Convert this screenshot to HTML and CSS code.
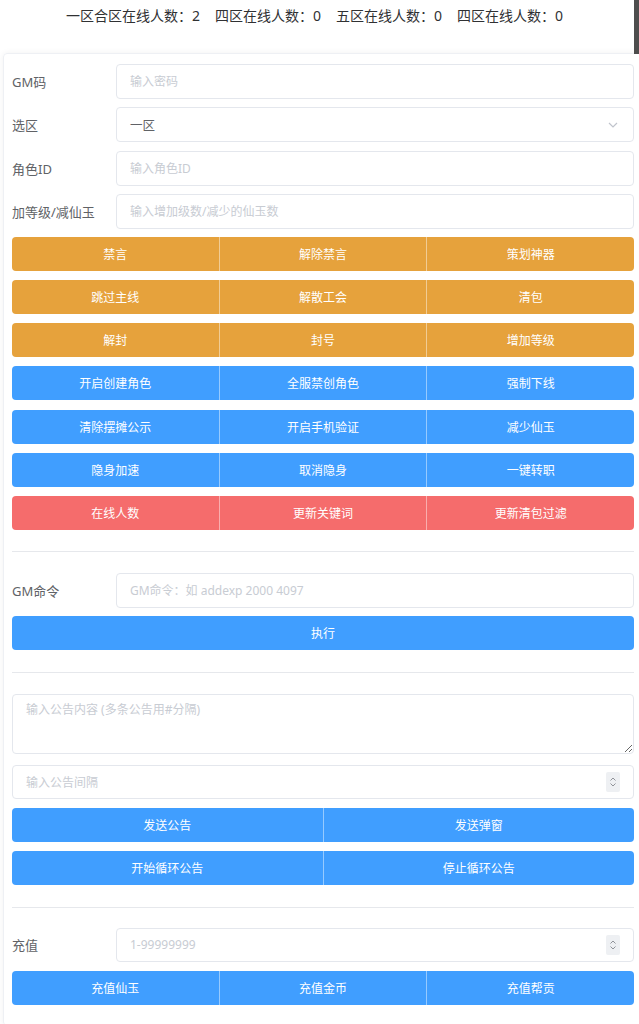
FILE: index.html
```html
<!DOCTYPE html>
<html lang="zh-CN">
<head>
<meta charset="utf-8">
<title>GM</title>
<link rel="stylesheet" href="styles.css">
</head>
<body>
<div class="topbar-thumb"></div>
<header class="stats">
  <span>一区合区在线人数：2</span>
  <span>四区在线人数：0</span>
  <span>五区在线人数：0</span>
  <span>四区在线人数：0</span>
</header>
<main class="card">
  <section class="form">
    <div class="row">
      <label class="label">GM码</label>
      <input class="input" type="text" placeholder="输入密码">
    </div>
    <div class="row">
      <label class="label">选区</label>
      <div class="input select">
        <span class="value">一区</span>
        <svg class="chev" width="10" height="6" viewBox="0 0 10 6"><polyline points="1,1 5,5 9,1" fill="none" stroke="#c0c4cc" stroke-width="1.2"/></svg>
      </div>
    </div>
    <div class="row">
      <label class="label">角色ID</label>
      <input class="input" type="text" placeholder="输入角色ID">
    </div>
    <div class="row">
      <label class="label">加等级/减仙玉</label>
      <input class="input" type="text" placeholder="输入增加级数/减少的仙玉数">
    </div>
  </section>

  <section class="btn-rows">
    <div class="group warning"><button>禁言</button><button>解除禁言</button><button>策划神器</button></div>
    <div class="group warning"><button>跳过主线</button><button>解散工会</button><button>清包</button></div>
    <div class="group warning"><button>解封</button><button>封号</button><button>增加等级</button></div>
    <div class="group primary"><button>开启创建角色</button><button>全服禁创角色</button><button>强制下线</button></div>
    <div class="group primary"><button>清除摆摊公示</button><button>开启手机验证</button><button>减少仙玉</button></div>
    <div class="group primary"><button>隐身加速</button><button>取消隐身</button><button>一键转职</button></div>
    <div class="group danger"><button>在线人数</button><button>更新关键词</button><button>更新清包过滤</button></div>
  </section>

  <hr class="divider d1">

  <section class="cmd">
    <div class="row">
      <label class="label">GM命令</label>
      <input class="input" type="text" placeholder="GM命令：如 addexp 2000 4097">
    </div>
    <div class="group primary single"><button>执行</button></div>
  </section>

  <hr class="divider d2">

  <section class="notice">
    <textarea class="textarea" placeholder="输入公告内容 (多条公告用#分隔)"></textarea>
    <div class="input number full">
      <span class="ph">输入公告间隔</span>
      <span class="spin"><svg width="8" height="12" viewBox="0 0 8 12"><polyline points="1.5,4.5 4,2 6.5,4.5" fill="none" stroke="#909399" stroke-width="1"/><polyline points="1.5,7.5 4,10 6.5,7.5" fill="none" stroke="#909399" stroke-width="1"/></svg></span>
    </div>
    <div class="group primary two"><button>发送公告</button><button>发送弹窗</button></div>
    <div class="group primary two"><button>开始循环公告</button><button>停止循环公告</button></div>
  </section>

  <hr class="divider d3">

  <section class="recharge">
    <div class="row">
      <label class="label">充值</label>
      <div class="input number">
        <span class="ph">1-99999999</span>
        <span class="spin"><svg width="8" height="12" viewBox="0 0 8 12"><polyline points="1.5,4.5 4,2 6.5,4.5" fill="none" stroke="#909399" stroke-width="1"/><polyline points="1.5,7.5 4,10 6.5,7.5" fill="none" stroke="#909399" stroke-width="1"/></svg></span>
      </div>
    </div>
    <div class="group primary"><button>充值仙玉</button><button>充值金币</button><button>充值帮贡</button></div>
  </section>
</main>
</body>
</html>
```
FILE: styles.css
```css
html, body {
  margin: 0;
  padding: 0;
  overflow: hidden;
  background: #ffffff;
}
body {
  font-family: "Noto Sans", "Noto Sans CJK SC", sans-serif;
  color: #606266;
  width: 639px;
  position: relative;
}
.topbar-thumb {
  position: absolute;
  top: 0;
  right: 0;
  width: 5px;
  height: 54px;
  background: #4d4d4d;
}
.stats {
  box-sizing: border-box;
  height: 53px;
  padding: 6px 10px 0 0;
  display: flex;
  justify-content: center;
  gap: 15px;
  font-size: 14px;
  line-height: 20px;
  color: #303133;
}
.card {
  box-sizing: border-box;
  margin-left: 3px;
  width: 640px;
  border: 1px solid #eef0f4;
  border-radius: 4px;
  box-shadow: 0 0 6px rgba(0, 0, 0, 0.06);
  padding: 10px 8px 20px 8px;
  display: flex;
  flex-direction: column;
}
.card > * {
  width: 622px;
}
.form {
  display: flex;
  flex-direction: column;
  gap: 8.33px;
}
.row {
  display: flex;
  align-items: center;
  height: 35px;
}
.label {
  width: 104px;
  flex: none;
  font-size: 13px;
  color: #606266;
}
.input {
  box-sizing: border-box;
  flex: 1;
  height: 35px;
  border: 1px solid #e4e7ed;
  border-radius: 4px;
  padding: 0 13px;
  font-family: inherit;
  font-size: 12px;
  color: #606266;
  outline: none;
  background: #fff;
}
.input::placeholder,
.textarea::placeholder,
.ph {
  color: #c8ccd3;
}
.select {
  display: flex;
  align-items: center;
  justify-content: space-between;
}
.select .value {
  font-size: 12.5px;
}
.chev {
  margin-right: 2px;
}
.btn-rows {
  margin-top: 8px;
  display: flex;
  flex-direction: column;
  gap: 9.17px;
}
.group {
  display: flex;
  height: 34px;
  border-radius: 4px;
  overflow: hidden;
}
.group button {
  flex: 1;
  border: none;
  margin: 0;
  padding: 0;
  font-family: inherit;
  font-size: 12px;
  color: #fff;
  border-left: 1px solid rgba(255, 255, 255, 0.45);
}
.group button:first-child {
  border-left: none;
}
.warning button { background: #e6a23c; }
.primary button { background: #409eff; }
.danger button { background: #f56c6c; }
.divider {
  border: none;
  height: 1px;
  background: #e6e8ec;
  margin: 0;
}
.d1 { margin-top: 21px; }
.d2 { margin-top: 22px; }
.d3 { margin-top: 22px; }
.cmd {
  margin-top: 21px;
  display: flex;
  flex-direction: column;
  gap: 8px;
}
.notice {
  margin-top: 21px;
  display: flex;
  flex-direction: column;
}
.textarea {
  box-sizing: border-box;
  height: 60px;
  border: 1px solid #e4e7ed;
  border-radius: 4px;
  padding: 6px 13px;
  font-family: inherit;
  font-size: 12px;
  line-height: 18px;
  resize: vertical;
  outline: none;
}
.number {
  display: flex;
  align-items: center;
  justify-content: space-between;
  height: 34px;
}
.number.full {
  flex: none;
  margin-top: 11px;
}
.spin {
  display: flex;
  align-items: center;
  justify-content: center;
  width: 14px;
  height: 20px;
  background: #eef0f3;
  border-radius: 2px;
}
.notice .group {
  margin-top: 9px;
}
.recharge {
  margin-top: 20px;
  display: flex;
  flex-direction: column;
  gap: 9px;
}
.recharge .row {
  height: 34px;
}
.recharge .input {
  height: 34px;
}
```
